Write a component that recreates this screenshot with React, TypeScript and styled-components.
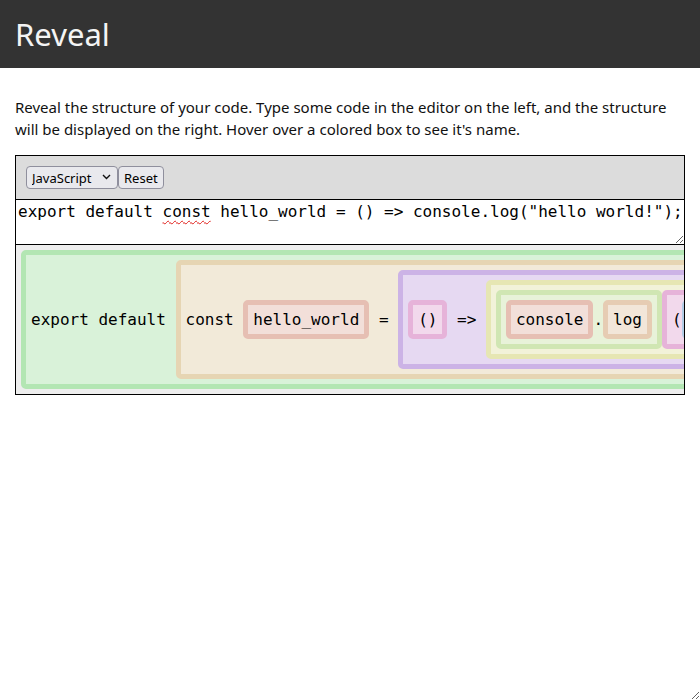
import React from "react";
import styled, { createGlobalStyle } from "styled-components";

const Global = createGlobalStyle`
  html, body { margin: 0; padding: 0; background: #fff; }
  body { font-family: "Noto Sans", sans-serif; color: #111; }
  * { box-sizing: border-box; }
`;

const Page = styled.div`
  height: 100vh;
  overflow: hidden;
  resize: both;
`;

const Header = styled.header`
  height: 68px;
  background: #333333;
  color: #f4f4f4;
  display: flex;
  align-items: center;
  padding: 0 15px;
`;

const Title = styled.h1`
  margin: 0;
  font-size: 31px;
  font-weight: 400;
  line-height: 1;
`;

const Main = styled.main`
  padding: 0 15px;
`;

const Intro = styled.p`
  margin: 28px 0 15px;
  font-size: 15px;
  line-height: 22px;
`;

const Editor = styled.section`
  border: 1px solid #000;
`;

const Toolbar = styled.div`
  background: #dcdcdc;
  padding: 10px;
  display: flex;
  align-items: center;
`;

const SelectWrap = styled.div`
  position: relative;
  display: flex;
`;

const LangSelect = styled.select`
  appearance: none;
  width: 92px;
  height: 23px;
  padding: 0 0 0 5px;
  border: 1px solid #8f8f9d;
  border-radius: 4px;
  background: #e9e9ed;
  color: #000;
  font: 13px "Noto Sans", sans-serif;
`;

const Chevron = styled.svg`
  position: absolute;
  right: 7px;
  top: 8px;
  pointer-events: none;
`;

const ResetButton = styled.button`
  height: 23px;
  padding: 0 5px;
  border: 1px solid #8f8f9d;
  border-radius: 4px;
  background: #e9e9ed;
  color: #000;
  font: 13px "Noto Sans", sans-serif;
`;

const EditorWrap = styled.div`
  position: relative;
`;

const CodeInput = styled.textarea`
  display: block;
  width: 100%;
  height: 46px;
  margin: 0;
  padding: 2px;
  border: none;
  border-top: 1px solid #000;
  border-bottom: 1px solid #000;
  font: 16px "DejaVu Sans Mono", monospace;
  line-height: 19px;
  color: #000;
  background: #fff;
  outline: none;
  white-space: pre;
  overflow: hidden;
`;

const SpellLayer = styled.div`
  position: absolute;
  top: 3px;
  left: 2px;
  font: 16px "DejaVu Sans Mono", monospace;
  line-height: 19px;
  white-space: pre;
  color: transparent;
  pointer-events: none;
`;

const Misspelled = styled.span`
  text-decoration: underline wavy #e0201c;
  text-decoration-thickness: 1px;
  text-underline-offset: 3px;
  text-decoration-skip-ink: none;
`;

const Structure = styled.div`
  background: #eeeeee;
  padding: 5px;
  overflow: hidden;
`;

const Row = styled.div`
  display: flex;
  width: max-content;
`;

const Box = styled.div<{ $hue: number }>`
  display: flex;
  align-items: center;
  flex-shrink: 0;
  padding: 5px;
  border: 5px solid hsl(${(p) => p.$hue} 50% 80%);
  border-radius: 5px;
  background: hsl(${(p) => p.$hue} 50% 90%);
`;

const Token = styled.span`
  font: 16px "DejaVu Sans Mono", monospace;
  line-height: 19px;
  white-space: pre;
  color: #000;
`;

type TreeNode = string | { name: string; hue: number; children: TreeNode[] };

const n = (name: string, hue: number, ...children: TreeNode[]): TreeNode => ({
  name,
  hue,
  children,
});

const tree: TreeNode = n(
  "ExportDefaultDeclaration",
  120,
  "export default ",
  n(
    "VariableDeclaration",
    40,
    "const ",
    n("Identifier", 15, "hello_world"),
    " = ",
    n(
      "ArrowFunctionExpression",
      270,
      n("Parameters", 315, "()"),
      " => ",
      n(
        "CallExpression",
        60,
        n(
          "MemberExpression",
          85,
          n("Identifier", 15, "console"),
          ".",
          n("PropertyIdentifier", 30, "log")
        ),
        n("Arguments", 315, "(", n("StringLiteral", 210, '"hello world!"'), ")")
      )
    ),
    ";"
  )
);

const Render = ({ node }: { node: TreeNode }) => {
  if (typeof node === "string") return <Token>{node}</Token>;
  return (
    <Box $hue={node.hue} title={node.name}>
      {node.children.map((c, i) => (
        <Render key={i} node={c} />
      ))}
    </Box>
  );
};

const code = 'export default const hello_world = () => console.log("hello world!");';

export default function App() {
  return (
    <Page>
      <Global />
      <Header>
        <Title>Reveal</Title>
      </Header>
      <Main>
        <Intro>
          Reveal the structure of your code. Type some code in the editor on the left, and the
          structure will be displayed on the right. Hover over a colored box to see it's name.
        </Intro>
        <Editor>
          <Toolbar>
            <SelectWrap>
              <LangSelect defaultValue="javascript">
                <option value="javascript">JavaScript</option>
                <option value="typescript">TypeScript</option>
                <option value="python">Python</option>
              </LangSelect>
              <Chevron width="9" height="6" viewBox="0 0 9 6">
                <polyline
                  points="1,1 4.5,4.5 8,1"
                  fill="none"
                  stroke="#111"
                  strokeWidth="1.4"
                />
              </Chevron>
            </SelectWrap>
            <ResetButton type="button">Reset</ResetButton>
          </Toolbar>
          <EditorWrap>
            <CodeInput defaultValue={code} spellCheck={false} />
            <SpellLayer aria-hidden="true">
              {"export default "}
              <Misspelled>const</Misspelled>
            </SpellLayer>
          </EditorWrap>
          <Structure>
            <Row>
              <Render node={tree} />
            </Row>
          </Structure>
        </Editor>
      </Main>
    </Page>
  );
}
